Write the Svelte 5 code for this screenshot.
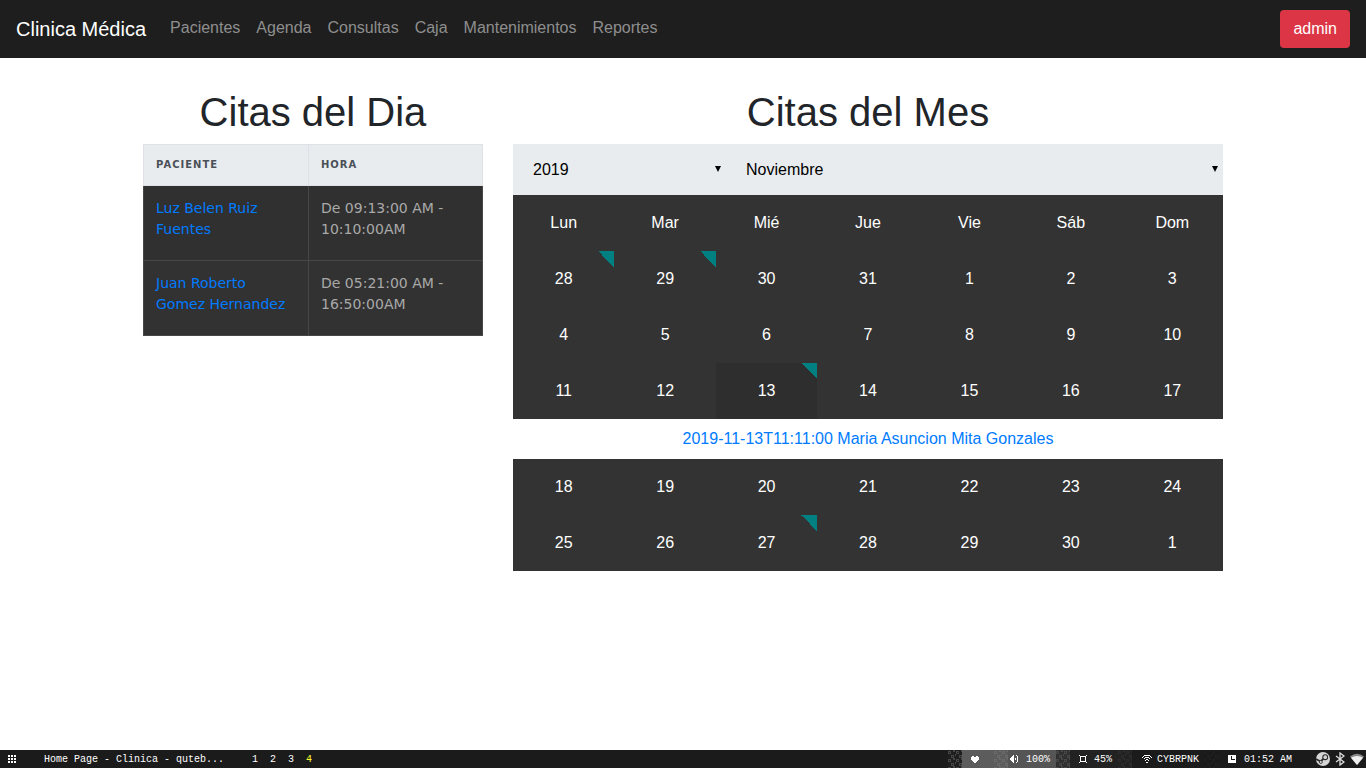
<script>
  const nav = ['Pacientes', 'Agenda', 'Consultas', 'Caja', 'Mantenimientos', 'Reportes'];
  const citas = [
    { paciente: 'Luz Belen Ruiz Fuentes', hora: 'De 09:13:00 AM - 10:10:00AM' },
    { paciente: 'Juan Roberto Gomez Hernandez', hora: 'De 05:21:00 AM - 16:50:00AM' }
  ];
  const meses = ['Enero', 'Febrero', 'Marzo', 'Abril', 'Mayo', 'Junio', 'Julio', 'Agosto', 'Septiembre', 'Octubre', 'Noviembre', 'Diciembre'];
  const dias = ['Lun', 'Mar', 'Mié', 'Jue', 'Vie', 'Sáb', 'Dom'];
  const semanas = [
    [28, 29, 30, 31, 1, 2, 3],
    [4, 5, 6, 7, 8, 9, 10],
    [11, 12, 13, 14, 15, 16, 17],
    [18, 19, 20, 21, 22, 23, 24],
    [25, 26, 27, 28, 29, 30, 1]
  ];
  const marcadas = ['0-0', '0-1', '2-2', '4-2'];
  let year = $state('2019');
  let month = $state('Noviembre');
  let abierta = $state('2-2');
</script>

{#snippet dither(id, from, to)}
  <svg class="dither" width="14" height="18" viewBox="0 0 14 18" shape-rendering="crispEdges" aria-hidden="true">
    <defs>
      <pattern {id} width="8" height="8" patternUnits="userSpaceOnUse">
        <path fill-rule="evenodd" d="M0 1h3v3H0zM1 2h1v1H1zM5 0h2v2H5zM3 5h3v3H3zM4 6h1v1H4zM7 4h1v2H7z" fill={to} />
      </pattern>
    </defs>
    <rect width="14" height="18" fill={from} />
    <rect width="14" height="18" fill="url(#{id})" />
  </svg>
{/snippet}

<div class="page">
  <header class="navbar">
    <a class="brand" href="#inicio">Clinica Médica</a>
    <nav>
      {#each nav as item}<a href="#{item}">{item}</a>{/each}
    </nav>
    <button class="admin" type="button">admin</button>
  </header>

  <main class="container">
    <section class="daily">
      <h1>Citas del Dia</h1>
      <table>
        <thead><tr><th class="patient" scope="col">Paciente</th><th scope="col">Hora</th></tr></thead>
        <tbody>
          {#each citas as cita}
            <tr><td><a href="#cita">{cita.paciente}</a></td><td>{cita.hora}</td></tr>
          {/each}
        </tbody>
      </table>
    </section>

    <section class="monthly">
      <h1>Citas del Mes</h1>
      <div class="pickers">
        <select aria-label="Año" bind:value={year}>
          <option>2018</option><option>2019</option><option>2020</option>
        </select>
        <select aria-label="Mes" bind:value={month}>
          {#each meses as mes}<option>{mes}</option>{/each}
        </select>
      </div>
      <div class="calendar">
        <div class="week">
          {#each dias as dia}<div class="day">{dia}</div>{/each}
        </div>
        {#each semanas as semana, s}
          <div class="week">
            {#each semana as dia, d}
              <button
                type="button"
                class="day"
                class:marked={marcadas.includes(`${s}-${d}`)}
                class:selected={abierta === `${s}-${d}`}
                onclick={() => (abierta = `${s}-${d}`)}>{dia}</button>
            {/each}
          </div>
          {#if abierta === '2-2' && s === 2}
            <div class="detail"><a href="#detalle">2019-11-13T11:11:00 Maria Asuncion Mita Gonzales</a></div>
          {/if}
        {/each}
      </div>
    </section>
  </main>

  <footer class="bar">
    <div class="left">
      <svg width="8" height="8" viewBox="0 0 8 8" fill="#fff" shape-rendering="crispEdges" aria-hidden="true">
        <path d="M0 0h2v2H0zM3 0h2v2H3zM6 0h2v2H6zM0 3h2v2H0zM3 3h2v2H3zM6 3h2v2H6zM0 6h2v2H0zM3 6h2v2H3zM6 6h2v2H6z" />
      </svg>
      <span class="title">Home Page - Clinica - quteb...</span>
      <div class="spaces"><span>1</span><span>2</span><span>3</span><span class="current">4</span></div>
    </div>
    <div class="right">
      {@render dither('d1', '#1e1e1e', '#454545')}
      <div class="seg heart">
        <svg width="8" height="8" viewBox="0 0 8 8" fill="#fff" shape-rendering="crispEdges" aria-hidden="true">
          <path d="M1 1h2v1h2V1h2v1h1v3H7v1H6v1H5v1H3V7H2V6H1V5H0V2h1z" />
        </svg>
      </div>
      {@render dither('d2', '#5c5c5c', '#6a6a6a')}
      <div class="seg volume">
        <svg width="9" height="8" viewBox="0 0 9 8" fill="#fff" shape-rendering="crispEdges" aria-hidden="true">
          <path d="M0 3h1V2h1V1h1V0h1v8H3V7H2V6H1V5H0zM5 3h1v2H5zM6 0h1v1H6zM7 1h1v6H7zM6 7h1v1H6z" />
        </svg>
        <span>100%</span>
      </div>
      {@render dither('d3', '#303030', '#484848')}
      <div class="seg light">
        <svg width="8" height="8" viewBox="0 0 8 8" fill="#fff" shape-rendering="crispEdges" aria-hidden="true">
          <path d="M0 0h1v1H0zM7 0h1v1H7zM0 7h1v1H0zM7 7h1v1H7zM1 1h6v1H1zM1 6h6v1H1zM1 2h1v4H1zM6 2h1v4H6z" />
        </svg>
        <span>45%</span>
      </div>
      {@render dither('d4', '#222222', '#2c2c2c')}
      <div class="seg wifi">
        <svg width="10" height="8" viewBox="0 0 10 8" fill="#fff" shape-rendering="crispEdges" aria-hidden="true">
          <path d="M2 0h6v1H2zM1 1h1v1H1zM8 1h1v1H8zM0 2h1v1H0zM9 2h1v1H9zM3 2h4v1H3zM2 3h1v1H2zM7 3h1v1H7zM4 4h2v1H4zM3 5h1v1H3zM6 5h1v1H6zM4 7h2v1H4z" />
        </svg>
        <span>CYBRPNK</span>
      </div>
      {@render dither('d5', '#191919', '#1f1f1f')}
      <div class="seg clock">
        <svg width="8" height="8" viewBox="0 0 8 8" fill="#fff" shape-rendering="crispEdges" aria-hidden="true">
          <path fill-rule="evenodd" d="M0 0h8v8H0zM3 1v4h4V4H4V1z" />
        </svg>
        <span>01:52 AM</span>
      </div>
      <div class="tray">
        <svg width="14" height="14" viewBox="0 0 14 14" aria-hidden="true">
          <circle cx="7" cy="7" r="7" fill="#d5d5d5" />
          <path d="M0 7l4.5 2.5L9 5.5" fill="none" stroke="#2b2b2b" stroke-width="1.8" />
          <circle cx="9.2" cy="5.2" r="2.4" fill="#d5d5d5" stroke="#2b2b2b" stroke-width="1.1" />
          <circle cx="4.8" cy="10" r="1.5" fill="#d5d5d5" stroke="#2b2b2b" stroke-width=".8" />
        </svg>
        <svg width="10" height="14" viewBox="0 0 10 14" fill="none" stroke="#ddd" stroke-width="1.3" aria-hidden="true">
          <path d="M1 4l8 6-4 3V1l4 3-8 6" />
        </svg>
        <svg width="14" height="12" viewBox="0 0 14 12" aria-hidden="true">
          <path d="M0 3.5Q7-2 14 3.5L7 12z" fill="#888" />
          <path d="M1 4.8Q7 1 13 4.8L7 12z" fill="#eee" />
        </svg>
      </div>
    </div>
  </footer>
</div>

<style>
  :global(body) { margin: 0; background: #fff; }
  .page {
    min-height: 100vh;
    display: flex;
    flex-direction: column;
    font: 16px/24px "Liberation Sans", Arial, sans-serif;
    color: #212529;
  }
  .page * { box-sizing: border-box; }
  a { color: #007bff; text-decoration: none; }
  button, select { font: inherit; border: 0; margin: 0; border-radius: 0; }
  .navbar {
    display: flex;
    align-items: center;
    padding: 10px 16px;
    background: #1e1e1e;
  }
  .brand { color: #fff; font-size: 20px; line-height: 30px; margin-right: 16px; }
  nav { display: flex; flex: 1; padding-bottom: 2px; }
  nav a { color: #8e8e8e; padding: 0 8px; }
  .admin { background: #dc3545; color: #fff; padding: 7px 13px; border-radius: 4px; }
  .container {
    flex: 1;
    width: 100%;
    max-width: 1140px;
    margin: 0 auto;
    padding: 30px 15px 0;
    display: grid;
    grid-template-columns: 1fr 2fr;
    align-items: start;
  }
  section { padding: 0 15px; }
  h1 { font-size: 40px; line-height: 48px; font-weight: 400; margin: 0 0 8px; text-align: center; }
  .daily h1, .monthly h1 { white-space: nowrap; }

  table {
    width: 100%;
    table-layout: fixed;
    border-collapse: collapse;
    font: 14px/21px "DejaVu Sans", sans-serif;
    background: #303030;
    color: #a9a9a9;
  }
  .patient { width: 165px; }
  th {
    height: 41px;
    padding: 0 12px 2px;
    text-align: left;
    font-size: 10px;
    letter-spacing: 1px;
    text-transform: uppercase;
    color: #495057;
    background: #e9ecef;
    border: 1px solid #dee2e6;
  }
  td { padding: 12px 12px 20px; vertical-align: top; border: 1px solid #474747; }
  tbody tr:nth-child(even) { background: #323232; }

  .pickers { display: grid; grid-template-columns: 3fr 7fr; background: #e9ecef; }
  select {
    appearance: none;
    height: 51px;
    padding: 0 20px;
    color: #000;
    background: url("data:image/svg+xml,%3Csvg xmlns='http://www.w3.org/2000/svg' width='6' height='6'%3E%3Cpath d='M0 0h6L3 6z'/%3E%3C/svg%3E") no-repeat right 5px top 22px;
  }
  .calendar { color: #fff; }
  .week { display: grid; grid-template-columns: repeat(7, 1fr); background: #333; }
  .day { padding: 16px 0; text-align: center; background: transparent; color: #fff; }
  .marked { background: linear-gradient(45deg, transparent 50%, #008080 50%) no-repeat top right / 16px 16px; }
  .selected { background-color: #2e2e2e; }
  .detail { padding: 8px; text-align: center; }

  .bar {
    display: flex;
    justify-content: space-between;
    height: 18px;
    background: #1b1b1b;
    color: #fff;
    font: 10px/18px "Liberation Mono", monospace;
    white-space: pre;
  }
  .left, .right, .seg, .spaces, .tray { display: flex; align-items: center; }
  .bar span { padding-top: 2px; }
  .left { padding-left: 8px; }
  .title { margin-left: 28px; }
  .spaces { margin-left: 28px; gap: 12px; }
  .current { color: #ffff32; }
  .seg { height: 18px; gap: 8px; }
  .heart { background: #5c5c5c; width: 32px; padding-left: 9px; }
  .volume { background: #555; width: 48px; padding-left: 2px; gap: 7px; }
  .light { width: 48px; padding-left: 9px; background: #222; gap: 7px; }
  .wifi { width: 72px; padding-left: 10px; gap: 5px; }
  .clock { width: 98px; padding-left: 10px; }
  .tray { gap: 5px; padding-right: 2px; }
</style>
